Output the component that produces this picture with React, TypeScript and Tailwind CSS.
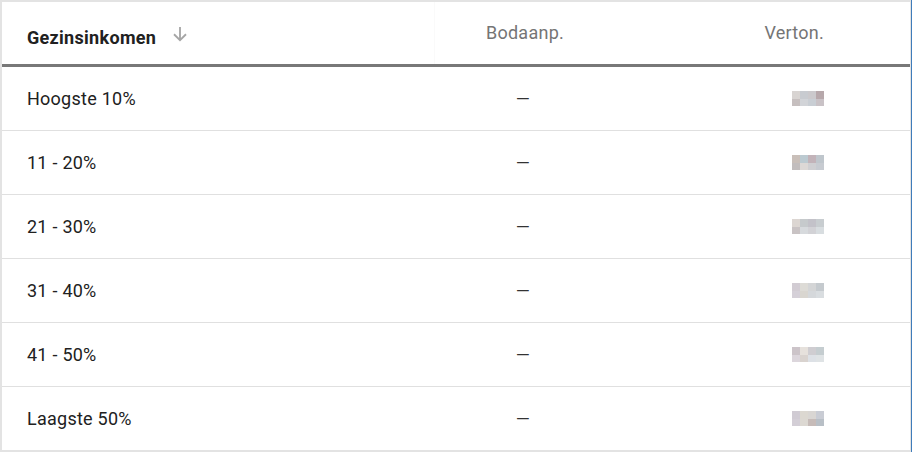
import React from "react";

const rows = [
  {
    label: "Hoogste 10%",
    px: ["#d8d4d2", "#c8cbd0", "#cbc9cc", "#b7a8ab", "#c6bfbf", "#d2d4d8", "#c9ced4", "#c9c2c6"],
  },
  {
    label: "11 - 20%",
    px: ["#c9bfb9", "#bccad1", "#c2b3b9", "#bfc6cc", "#c2bdbd", "#dcd8d6", "#cfcfd2", "#c7cbd1"],
  },
  {
    label: "21 - 30%",
    px: ["#dcd6d2", "#c6cacc", "#c3c2c9", "#c8cdd0", "#c9c3c4", "#d7dadd", "#d2d2d6", "#d8dde0"],
  },
  {
    label: "31 - 40%",
    px: ["#d2ccd3", "#dddbd6", "#d4d5d6", "#c5cace", "#d5d0d8", "#d9d6d0", "#d5d8db", "#d9dde0"],
  },
  {
    label: "41 - 50%",
    px: ["#ccc4c9", "#e6e1dc", "#cfcdd1", "#c5cdd0", "#dcd6dc", "#d9d3cf", "#dde1e6", "#dfe3e5"],
  },
  {
    label: "Laagste 50%",
    px: ["#d0cbd3", "#dcd8d1", "#d9d6d3", "#c9ccd4", "#d3ced6", "#dcd8d2", "#c6bbb8", "#b8bfc6"],
  },
];

const Pixels = ({ colors }: { colors: string[] }) => (
  <div className="grid grid-cols-[8px_8px_8px_8px] grid-rows-[8px_7px]">
    {colors.map((c, i) => (
      <div key={i} style={{ backgroundColor: c }} />
    ))}
  </div>
);

const App = () => {
  return (
    <div className="flex w-[912px] h-[452px] bg-white font-['Roboto',sans-serif] text-[18px] tracking-[0.25px] text-[#212121]">
      <div className="flex-1 flex flex-col border-l-2 border-t-2 border-b-2 border-r border-[#e3e3e3]">
        {/* header */}
        <div className="grid grid-cols-[433px_180px_1fr] h-[62px] items-stretch">
          <div className="flex items-center pl-[25px] pt-[8px] border-r border-[#fafafa]">
            <span className="font-bold text-[18px] tracking-[0.3px]">Gezinsinkomen</span>
            <svg width="20" height="20" viewBox="0 0 24 24" className="ml-[14px] mb-[6px]">
              <path d="M12 3.5v16M4.8 12.3l7.2 7.2 7.2-7.2" fill="none" stroke="#a6a6a6" strokeWidth="2.2" />
            </svg>
          </div>
          <div className="flex items-center justify-center pb-[2px] text-[#757575]">Bodaanp.</div>
          <div className="flex items-center justify-end pb-[2px] pr-[86px] text-[#757575]">Verton.</div>
        </div>
        <div className="h-[3px] bg-[#787878]" />
        {/* rows */}
        {rows.map((r, i) => (
          <div
            key={r.label}
            className={
              "grid grid-cols-[433px_180px_1fr] items-center " +
              (i < rows.length - 1 ? "h-[64px] border-b border-[#e0e0e0]" : "h-[63px]")
            }
          >
            <div className="pl-[25px]">{r.label}</div>
            <div className="text-center text-[#333] pr-[4px]">—</div>
            <div className="flex justify-end pr-[86px]">
              <Pixels colors={r.px} />
            </div>
          </div>
        ))}
      </div>
      <div className="w-px bg-[#3f7cba]" />
    </div>
  );
};

export default App;
